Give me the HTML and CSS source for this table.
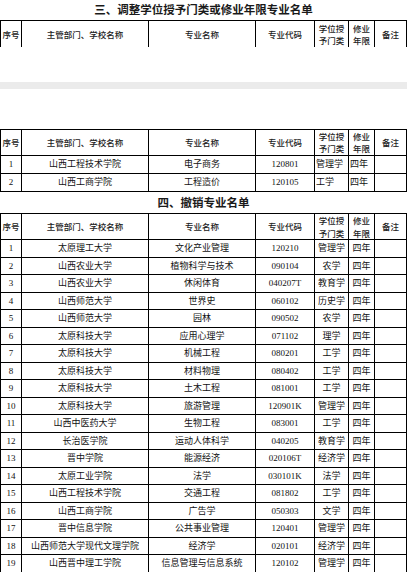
FILE: index.html
```html
<!DOCTYPE html>
<html lang="zh-CN">
<head>
<meta charset="utf-8">
<title>专业名单</title>
<link rel="stylesheet" href="styles.css">
</head>
<body>
<div class="page">
  <h2 class="title t1">三、调整学位授予门类或修业年限专业名单</h2>
  <table class="grid open">
    <colgroup><col class="c1"><col class="c2"><col class="c3"><col class="c4"><col class="c5"><col class="c6"><col class="c7"></colgroup>
    <tr class="head h1"><th>序号</th><th>主管部门、学校名称</th><th>专业名称</th><th>专业代码</th><th>学位授<br>予门类</th><th>修业<br>年限</th><th>备注</th></tr>
  </table>
  <div class="gap1"></div>
  <div class="band"></div>
  <div class="gap2"></div>
  <table class="grid left">
    <colgroup><col class="c1"><col class="c2"><col class="c3"><col class="c4"><col class="c5"><col class="c6"><col class="c7"></colgroup>
    <tr class="head h2"><th>序号</th><th>主管部门、学校名称</th><th>专业名称</th><th>专业代码</th><th>学位授<br>予门类</th><th>修业<br>年限</th><th>备注</th></tr>
    <tr class="r2"><td>1</td><td>山西工程技术学院</td><td>电子商务</td><td>120801</td><td>管理学</td><td>四年</td><td></td></tr>
    <tr class="r2"><td>2</td><td>山西工商学院</td><td>工程造价</td><td>120105</td><td>工学</td><td>四年</td><td></td></tr>
  </table>
  <h2 class="title t2">四、撤销专业名单</h2>
  <table class="grid">
    <colgroup><col class="c1"><col class="c2"><col class="c3"><col class="c4"><col class="c5"><col class="c6"><col class="c7"></colgroup>
    <tr class="head h3"><th>序号</th><th>主管部门、学校名称</th><th>专业名称</th><th>专业代码</th><th>学位授<br>予门类</th><th>修业<br>年限</th><th>备注</th></tr>
    <tr><td>1</td><td>太原理工大学</td><td>文化产业管理</td><td>120210</td><td>管理学</td><td>四年</td><td></td></tr>
    <tr><td>2</td><td>山西农业大学</td><td>植物科学与技术</td><td>090104</td><td>农学</td><td>四年</td><td></td></tr>
    <tr><td>3</td><td>山西农业大学</td><td>休闲体育</td><td>040207T</td><td>教育学</td><td>四年</td><td></td></tr>
    <tr><td>4</td><td>山西师范大学</td><td>世界史</td><td>060102</td><td>历史学</td><td>四年</td><td></td></tr>
    <tr><td>5</td><td>山西师范大学</td><td>园林</td><td>090502</td><td>农学</td><td>四年</td><td></td></tr>
    <tr><td>6</td><td>太原科技大学</td><td>应用心理学</td><td>071102</td><td>理学</td><td>四年</td><td></td></tr>
    <tr><td>7</td><td>太原科技大学</td><td>机械工程</td><td>080201</td><td>工学</td><td>四年</td><td></td></tr>
    <tr><td>8</td><td>太原科技大学</td><td>材料物理</td><td>080402</td><td>工学</td><td>四年</td><td></td></tr>
    <tr><td>9</td><td>太原科技大学</td><td>土木工程</td><td>081001</td><td>工学</td><td>四年</td><td></td></tr>
    <tr><td>10</td><td>太原科技大学</td><td>旅游管理</td><td>120901K</td><td>管理学</td><td>四年</td><td></td></tr>
    <tr><td>11</td><td>山西中医药大学</td><td>生物工程</td><td>083001</td><td>工学</td><td>四年</td><td></td></tr>
    <tr><td>12</td><td>长治医学院</td><td>运动人体科学</td><td>040205</td><td>教育学</td><td>四年</td><td></td></tr>
    <tr><td>13</td><td>晋中学院</td><td>能源经济</td><td>020106T</td><td>经济学</td><td>四年</td><td></td></tr>
    <tr><td>14</td><td>太原工业学院</td><td>法学</td><td>030101K</td><td>法学</td><td>四年</td><td></td></tr>
    <tr><td>15</td><td>山西工程技术学院</td><td>交通工程</td><td>081802</td><td>工学</td><td>四年</td><td></td></tr>
    <tr><td>16</td><td>山西工商学院</td><td>广告学</td><td>050303</td><td>文学</td><td>四年</td><td></td></tr>
    <tr><td>17</td><td>晋中信息学院</td><td>公共事业管理</td><td>120401</td><td>管理学</td><td>四年</td><td></td></tr>
    <tr><td>18</td><td>山西师范大学现代文理学院</td><td>经济学</td><td>020101</td><td>经济学</td><td>四年</td><td></td></tr>
    <tr><td>19</td><td>山西晋中理工学院</td><td>信息管理与信息系统</td><td>120102</td><td>管理学</td><td>四年</td><td></td></tr>
  </table>
</div>
</body>
</html>
```
FILE: styles.css
```css
html, body {
  margin: 0;
  padding: 0;
  background: #fff;
}
.page {
  width: 407px;
  color: #111;
  font-family: "Liberation Serif", "Noto Sans CJK SC", serif;
}
.title {
  margin: 0;
  font-family: "Noto Sans CJK SC", sans-serif;
  font-weight: 700;
  font-size: 11.5px;
  text-align: center;
  color: #1a1a1a;
}
.t1 {
  height: 20px;
  line-height: 18px;
}
.t2 {
  height: 21px;
  line-height: 21px;
}
.grid {
  width: 406px;
  table-layout: fixed;
  border-collapse: collapse;
  margin: 0;
}
.c1 { width: 21px; }
.c2 { width: 127px; }
.c3 { width: 107px; }
.c4 { width: 59px; }
.c5 { width: 34px; }
.c6 { width: 26px; }
.c7 { width: 32px; }
.grid th, .grid td {
  border: 1px solid #000;
  padding: 0;
  text-align: center;
  vertical-align: middle;
  white-space: nowrap;
  overflow: hidden;
}
.grid th {
  font-family: "Noto Sans CJK SC", sans-serif;
  font-weight: 500;
  font-size: 8.5px;
  line-height: 12.4px;
  color: #222;
}
.grid td {
  font-size: 9px;
  line-height: 11px;
  height: 16.5px;
}
.open th {
  border-bottom: none;
}
.h1 th { height: 26px; }
.h2 th { height: 24px; }
.h3 th { height: 25.5px; }
.r2 td { height: 17px; }
.left td:nth-child(5),
.left td:nth-child(6) {
  text-align: left;
  padding-left: 1px;
}
.gap1 { height: 35px; }
.band { height: 7px; background: #ebebeb; }
.gap2 { height: 40px; }
```
